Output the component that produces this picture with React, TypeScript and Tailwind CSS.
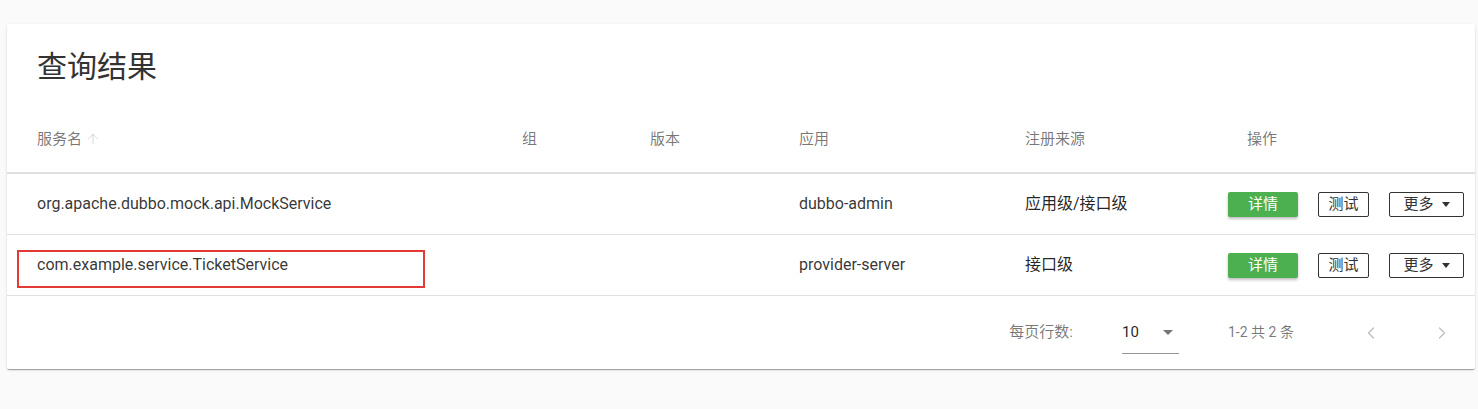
import { ArrowUp, ChevronLeft, ChevronRight } from 'lucide-react';

const services = [
  { name: 'org.apache.dubbo.mock.api.MockService', group: '', version: '', app: 'dubbo-admin', registry: '应用级/接口级' },
  { name: 'com.example.service.TicketService', group: '', version: '', app: 'provider-server', registry: '接口级', marked: true },
];

const cols = 'grid grid-cols-[515px_128px_149px_226px_203px_1fr] items-center';

export default function App() {
  return (
    <div
      className="min-h-[409px] bg-[#fafafa] pt-6 pl-[7px] pr-[3px] text-[rgba(0,0,0,0.87)]"
      style={{ fontFamily: "Roboto, 'Noto Sans CJK SC', sans-serif" }}
    >
      <div className="bg-white rounded-[2px] shadow-[0_2px_1px_-1px_rgba(0,0,0,0.2),0_1px_1px_0_rgba(0,0,0,0.14),0_1px_3px_0_rgba(0,0,0,0.12)]">
        {/* Title */}
        <div className="h-20 flex items-center pl-[30px] pt-1">
          <h2 className="text-[30px] font-normal text-[#333]">查询结果</h2>
        </div>

        {/* Header */}
        <div className={`${cols} h-[70px] border-b-2 border-[#e0e0e0] text-[15px] text-[rgba(0,0,0,0.54)] pt-[2px]`}>
          <div className="pl-[30px] flex items-center gap-[3px]">
            服务名
            <ArrowUp className="w-4 h-4 text-[rgba(0,0,0,0.15)]" strokeWidth={1.5} />
          </div>
          <div>组</div>
          <div>版本</div>
          <div>应用</div>
          <div>注册来源</div>
          <div className="pl-[19px]">操作</div>
        </div>

        {/* Rows */}
        {services.map((s) => (
          <div key={s.name} className={`${cols} h-[61px] border-b border-[#e0e0e0] text-[16px] relative`}>
            <div className="pl-[30px] text-[rgba(0,0,0,0.8)]">{s.name}</div>
            <div>{s.group}</div>
            <div>{s.version}</div>
            <div className="text-[rgba(0,0,0,0.8)]">{s.app}</div>
            <div>{s.registry}</div>
            <div className="flex items-center gap-5 text-[15px]">
              <button className="w-[70px] h-[25px] rounded-[2px] bg-[#4caf50] text-white shadow-[0_2px_3px_rgba(0,0,0,0.25)]">
                详情
              </button>
              <button className="w-[51px] h-[25px] rounded-[2px] border border-[#333] text-[#333]">测试</button>
              <button className="w-[75px] h-[25px] rounded-[2px] border border-[#333] text-[#333] flex items-center justify-center gap-2">
                更多
                <span className="w-0 h-0 border-l-[4px] border-r-[4px] border-t-[5px] border-l-transparent border-r-transparent border-t-[#333]" />
              </button>
            </div>
            {s.marked && (
              <div className="absolute left-[10px] top-[15px] w-[408px] h-[38px] border-2 border-[#e53935]" />
            )}
          </div>
        ))}

        {/* Footer */}
        <div className="h-[73px] flex items-center justify-end text-[15px] text-[rgba(0,0,0,0.54)] pr-[23px]">
          <span>每页行数:</span>
          <div className="ml-[49px] w-[57px] h-[42px] flex items-center justify-between border-b border-[rgba(0,0,0,0.42)] mt-[1px] text-[15px] text-[rgba(0,0,0,0.87)]">
            <span>10</span>
            <span className="mr-[6px] w-0 h-0 border-l-[5px] border-r-[5px] border-t-[5px] border-l-transparent border-r-transparent border-t-[rgba(0,0,0,0.54)]" />
          </div>
          <span className="ml-[49px] w-[133px] text-[14px]">1-2 共 2 条</span>
          <ChevronLeft className="w-5 h-5 text-[rgba(0,0,0,0.26)]" strokeWidth={1.5} />
          <ChevronRight className="ml-[51px] w-5 h-5 text-[rgba(0,0,0,0.26)]" strokeWidth={1.5} />
        </div>
      </div>
    </div>
  );
}
